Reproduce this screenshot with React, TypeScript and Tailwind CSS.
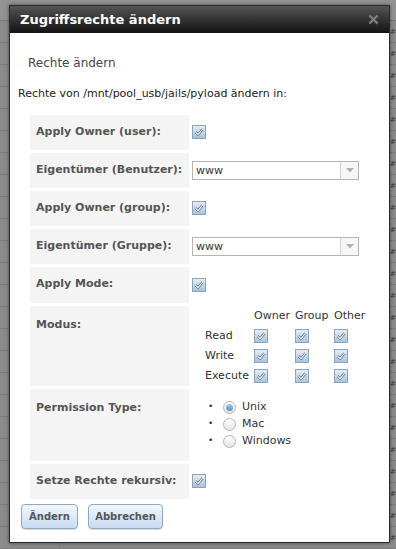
import React from "react";

const Check = () => (
  <span className="inline-flex h-[14px] w-[14px] items-center justify-center border border-[#8da3bb] bg-gradient-to-b from-[#e3edf7] to-[#a8c3dd]">
    <svg width="10" height="10" viewBox="0 0 10 10">
      <path d="M1.5 5.2 L4 7.6 L8.6 2.2" fill="none" stroke="#4d5f73" strokeWidth="2.4" />
      <path d="M1.5 5.2 L4 7.6 L8.6 2.2" fill="none" stroke="#ffffff" strokeWidth="1.1" />
    </svg>
  </span>
);

const Radio = ({ on }: { on?: boolean }) => (
  <span className="inline-flex h-[13px] w-[13px] items-center justify-center rounded-full border border-[#b5b5b5] bg-gradient-to-b from-[#ffffff] to-[#e4e4e4]">
    {on && <span className="h-[7px] w-[7px] rounded-full bg-gradient-to-b from-[#a9c8e6] to-[#5d8fc0]" />}
  </span>
);

const Select = () => (
  <div className="flex h-[19px] w-[167px] items-stretch border border-[#b4b4b4] bg-white">
    <span className="flex-1 pl-[3px] text-[11px] leading-[17px] text-[#333]">www</span>
    <span className="flex w-[18px] items-center justify-center border-l border-[#d4d4d4] bg-[#f6f6f6]">
      <svg width="8" height="5" viewBox="0 0 8 5">
        <path d="M0 0 H8 L4 4.5 Z" fill="#a8b2bd" />
      </svg>
    </span>
  </div>
);

const Row = ({ label, h, top, children }: { label: string; h: string; top?: boolean; children: React.ReactNode }) => (
  <div className={`flex ${h}`}>
    <div className={`w-[159px] shrink-0 bg-[#f4f4f4] pl-[6px] text-[11px] font-bold text-[#555] ${top ? "pt-[11px]" : "flex items-center"}`}>
      {label}
    </div>
    <div className={`flex-1 pl-[3px] ${top ? "" : "flex items-center"}`}>{children}</div>
  </div>
);

const lines = Array.from({ length: 24 });

const App = () => {
  return (
    <div className="relative h-[549px] w-[396px] overflow-hidden bg-[#8c8c8c] font-['DejaVu_Sans',sans-serif]">
      {/* page behind the overlay */}
      <div className="absolute inset-0 flex flex-col">
        <div className="h-[31px] border-b border-[#777] bg-[#939393]" />
        {lines.map((_, i) => (
          <div key={i} className="flex h-[22px] border-b border-[#7d7d7d]">
            <div className="w-[60px] border-r border-[#7d7d7d]" />
            <div className="flex-1" />
            <div className="w-[6px] pr-[1px] text-[7px] leading-[22px] text-[#333]">#</div>
          </div>
        ))}
      </div>

      {/* dialog */}
      <div className="absolute left-[9px] top-[5px] w-[381px] border border-[#2a2a2a] bg-white shadow-[0_0_4px_rgba(0,0,0,0.5)]">
        <div className="flex h-[27px] items-center justify-between bg-gradient-to-b from-[#555] to-[#141414] pl-[10px] pr-[10px]">
          <span className="text-[13px] font-bold text-white">Zugriffsrechte ändern</span>
          <svg width="11" height="11" viewBox="0 0 11 11">
            <path d="M1.5 1.5 L9.5 9.5 M9.5 1.5 L1.5 9.5" stroke="#6d6d6d" strokeWidth="2.6" />
            <path d="M1.5 1.5 L9.5 9.5 M9.5 1.5 L1.5 9.5" stroke="#8e8e8e" strokeWidth="1" />
          </svg>
        </div>

        <div className="px-[8px] pb-[13px]">
          <div className="pl-[10px] pt-[21px] text-[12px] text-[#444]">Rechte ändern</div>
          <div className="pt-[14px] text-[11px] text-[#222]">Rechte von /mnt/pool_usb/jails/pyload ändern in:</div>

          <div className="ml-[12px] mt-[12px] flex flex-col gap-[3px]">
            <Row label="Apply Owner (user):" h="h-[35px]">
              <Check />
            </Row>
            <Row label="Eigentümer (Benutzer):" h="h-[35px]">
              <Select />
            </Row>
            <Row label="Apply Owner (group):" h="h-[35px]">
              <Check />
            </Row>
            <Row label="Eigentümer (Gruppe):" h="h-[35px]">
              <Select />
            </Row>
            <Row label="Apply Mode:" h="h-[36px]">
              <Check />
            </Row>
            <Row label="Modus:" h="h-[80px]" top>
              <div className="grid grid-cols-[49px_41px_39px_40px] pl-[13px] text-[11px] text-[#333]">
                <span />
                <span className="h-[20px] leading-[20px]">Owner</span>
                <span className="h-[20px] leading-[20px]">Group</span>
                <span className="h-[20px] leading-[20px]">Other</span>
                {["Read", "Write", "Execute"].map((r) => (
                  <React.Fragment key={r}>
                    <span className="h-[20px] leading-[20px]">{r}</span>
                    <span className="flex h-[20px] items-center"><Check /></span>
                    <span className="flex h-[20px] items-center"><Check /></span>
                    <span className="flex h-[20px] items-center"><Check /></span>
                  </React.Fragment>
                ))}
              </div>
            </Row>
            <Row label="Permission Type:" h="h-[72px]" top>
              <ul className="flex flex-col pl-[16px] pt-[10px] text-[11px] text-[#333]">
                {["Unix", "Mac", "Windows"].map((t, i) => (
                  <li key={t} className="flex h-[17px] items-center">
                    <span className="w-[15px] text-[9px]">•</span>
                    <Radio on={i === 0} />
                    <span className="pl-[6px]">{t}</span>
                  </li>
                ))}
              </ul>
            </Row>
            <Row label="Setze Rechte rekursiv:" h="h-[35px]">
              <Check />
            </Row>
          </div>

          <div className="mt-[5px] flex gap-[10px] pl-[3px]">
            <button className="h-[25px] w-[57px] rounded-[4px] border border-[#8fa8c2] bg-gradient-to-b from-[#f4f8fc] to-[#c6dbf1] text-[10px] font-bold text-[#555] shadow-[0_1px_1px_rgba(0,0,0,0.15)]">
              Ändern
            </button>
            <button className="h-[25px] w-[75px] rounded-[4px] border border-[#8fa8c2] bg-gradient-to-b from-[#f4f8fc] to-[#c6dbf1] text-[10px] font-bold text-[#555] shadow-[0_1px_1px_rgba(0,0,0,0.15)]">
              Abbrechen
            </button>
          </div>
        </div>
      </div>
    </div>
  );
};

export default App;
